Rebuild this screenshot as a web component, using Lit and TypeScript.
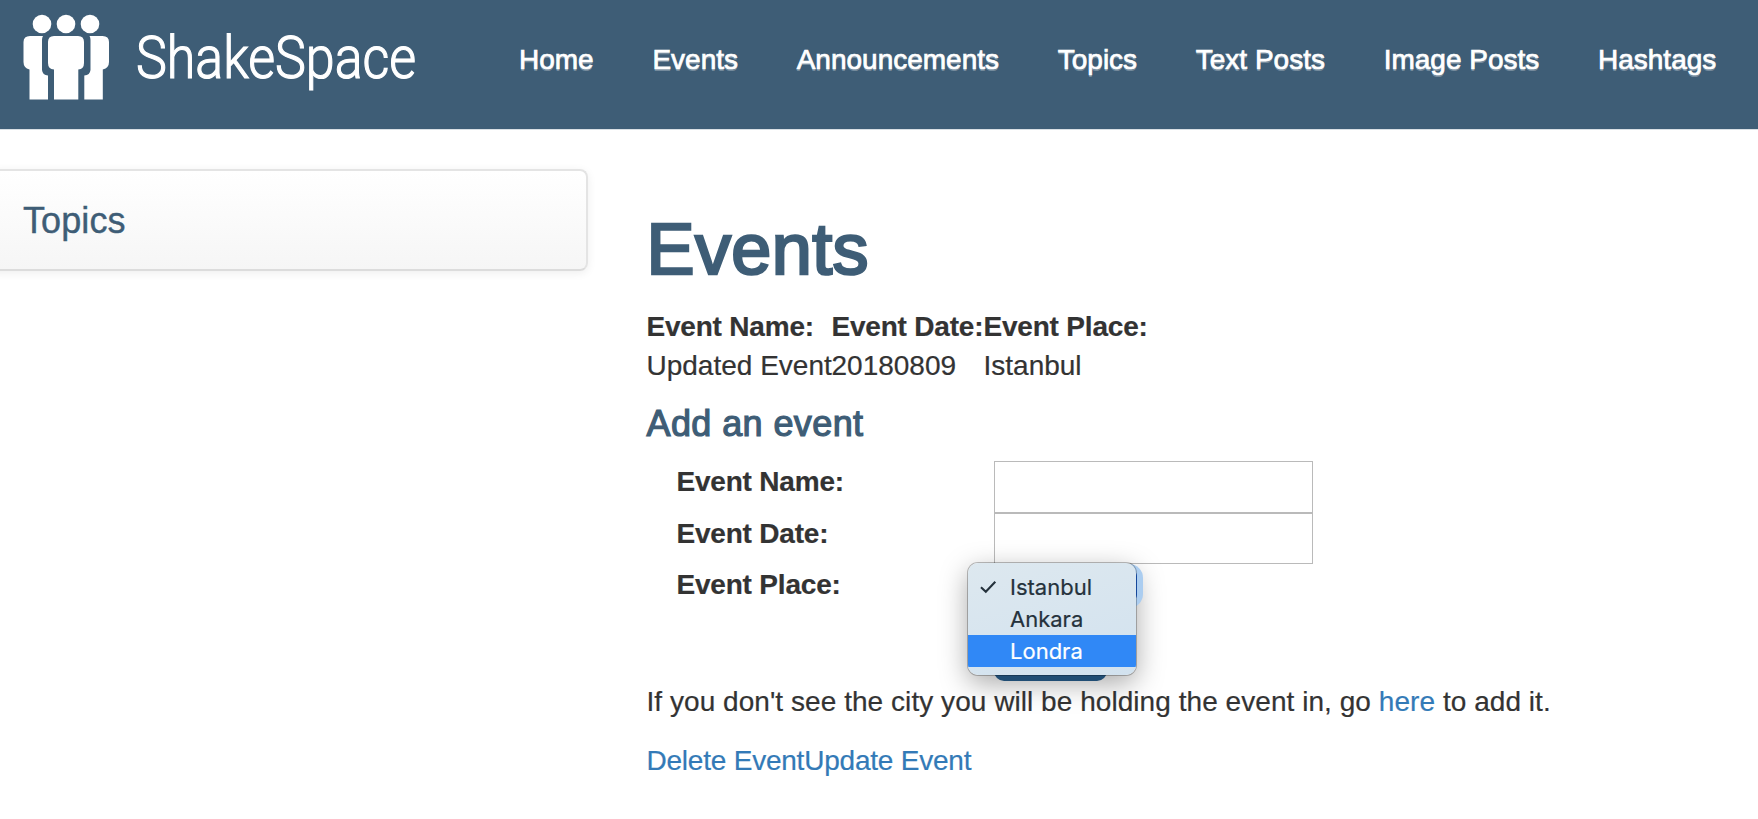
import { LitElement, html, css, svg } from "lit";
import { customElement, state } from "lit/decorators.js";
import { classMap } from "lit/directives/class-map.js";

@customElement("brand-logo")
class BrandLogo extends LitElement {
  static styles = css`
    :host { display: flex; width: 440px; height: 129px; flex: none; }
    .art { display: block; flex: none; }
    .word {
      margin: 21.500px 0 0 16px; height: 72px; font: 300 60px/72px Roboto, "Liberation Sans", sans-serif; color: #fff;
      transform: scaleX(.866); transform-origin: 0 0; white-space: nowrap; -webkit-text-stroke: 1.200px #fff;
    }
  `;
  render() {
    return html`<svg class="art" width="120" height="129" viewBox="0 0 120 129" fill="#fff">
      ${[42, 66, 90].map((x) => svg`<circle cx=${x} cy="24" r="9.3"/>`)}
      <path d="M54 36H78Q84 36 84 42V63Q84 69 78.300 69.500V99.500H54V69.500Q48 69 48 63V42Q48 36 54 36Z"/>
      <path d="M30 36H43Q42 37.500 42 40V70Q42.500 75 48 75.500V99.500H29.500V69.500Q23.500 68 23.500 62V42Q23.500 36 30 36Z"/>
      <path d="M102.500 36H89.500Q90.500 37.500 90.500 40V70Q90 75 84.300 75.500V99.500H102.800V69.500Q109 68 109 62V42Q109 36 102.500 36Z"/>
    </svg><span class="word">ShakeSpace</span>`;
  }
}

@customElement("app-root")
class AppRoot extends LitElement {
  static styles = css`
    :host {
      display: block; width: 1758px; height: 819px; overflow: hidden; background: #fff;
      font: 28px/40px "Liberation Sans", Arial, sans-serif; color: #333; -webkit-text-stroke: .2px;
    }
    * { box-sizing: border-box; }
    a { text-decoration: none; color: #337ab7; }
    .bar { display: flex; height: 130px; background: #3e5d76; border-bottom: 1px solid #d9dfe4; }
    .nav { display: flex; gap: 58.700px; padding: 40px 0 0 79px; white-space: nowrap; }
    .nav a { color: #fff; -webkit-text-stroke: .7px #fff; text-shadow: 0 2px 0 rgba(255, 255, 255, .3); }
    .body { display: flex; align-items: flex-start; }
    .side {
      width: 600px; height: 102px; margin: 39px 0 0 -12px; flex: none; padding: 30px 0 0 33px;
      border: 2px solid #e4e4e4; border-bottom-color: #dcdcdc; border-radius: 8px;
      background: linear-gradient(#fff, #f6f6f6);
      box-shadow: 0 2px 10px rgba(0, 0, 0, .07);
      font-size: 36px; color: #3e5d76; letter-spacing: .1px; -webkit-text-stroke: .4px #3e5d76;
    }
    .main { padding: 80px 0 0 58.500px; }
    .title { margin: 0 0 18px; font-size: 72px; font-weight: 400; line-height: 79px; letter-spacing: .4px; color: #3e5d76; -webkit-text-stroke: 2.600px #3e5d76; }
    .list { display: grid; grid-template-columns: 185px 152px auto; grid-auto-rows: 39px; justify-content: start; white-space: nowrap; line-height: 39px; }
    .head { font-weight: 700; letter-spacing: -.2px; }
    .sub { margin: 19px 0 17px; font-size: 36px; font-weight: 400; line-height: 40px; letter-spacing: .4px; color: #3e5d76; -webkit-text-stroke: 1.200px #3e5d76; }
    .form { display: grid; grid-template-columns: 317.500px 319px; grid-template-rows: 52px 51px 52px 66px; padding-left: 30px; }
    .label { font-weight: 700; padding-top: 1px; letter-spacing: -.2px; }
    .field { width: 319px; height: 52px; border: 1px solid #bababa; border-radius: 0; background: #fff; padding: 0 8px; font: inherit; outline: none; }
    .field.last { height: 51px; }
    .place { position: relative; height: 44px; }
    .select { position: relative; z-index: 1; width: 149px; height: 44px; border-radius: 14px; background: #abcdf0; padding: 6px 6px; }
    .cap { height: 31px; border-radius: 6px; background: #1d5fcf; }
    .menu {
      position: absolute; left: -26px; top: -1px; width: 168px; height: 112px; padding-top: 8px; z-index: 2;
      border-radius: 10px; background: linear-gradient(165deg, #dde8ef, #d2e2ef); overflow: hidden;
      box-shadow: 0 0 0 1px rgba(0, 0, 0, .25);
      font: 22px/32px Inter, "Open Sans", sans-serif; color: #25323c;
    }
    .glow { position: absolute; left: -26px; top: -1px; width: 168px; height: 112px; border-radius: 10px; box-shadow: 0 8px 28px rgba(0, 0, 0, .35); }
    .item { display: flex; height: 32px; }
    .item.on { background: #3088f6; color: #fff; }
    .mark { width: 42px; padding: 9px 0 0 12px; flex: none; line-height: 0; }
    .send { width: 113px; height: 52px; margin-top: 13px; border: 0; border-radius: 10px; background: #204d74; display: block; position: relative; z-index: 1; }
    .note { margin: 0 0 19px; white-space: nowrap; letter-spacing: .05px; }
    .links { display: flex; letter-spacing: -.22px; }
  `;

  @state() private places = ["Istanbul", "Ankara", "Londra"];
  @state() private active = "Londra";

  render() {
    return html`
      <header class="bar">
        <brand-logo></brand-logo>
        <nav class="nav">
          ${["Home", "Events", "Announcements", "Topics", "Text Posts", "Image Posts", "Hashtags"].map((t) => html`<a>${t}</a>`)}
        </nav>
      </header>
      <div class="body">
        <aside class="side">Topics</aside>
        <main class="main">
          <h1 class="title">Events</h1>
          <div class="list">
            <span class="head">Event Name:</span><span class="head">Event Date:</span><span class="head">Event Place:</span>
            <span>Updated Event</span><span>20180809</span><span>Istanbul</span>
          </div>
          <h3 class="sub">Add an event</h3>
          <div class="form">
            <label class="label">Event Name:</label><input class="field" />
            <label class="label">Event Date:</label><input class="field last" />
            <label class="label">Event Place:</label>
            <div class="place">
              <div class="glow"></div>
              <div class="select"><div class="cap"></div></div>
              <div class="menu">
                ${this.places.map((p, i) => html`<div class=${classMap({ item: true, on: p === this.active })}>
                  <span class="mark">${i === 0
                    ? html`<svg width="17" height="14" viewBox="0 0 17 14" fill="none" stroke="#25323c" stroke-width="2.100"><path d="M1 7.200L5.800 11.700L15.300 1.700"/></svg>`
                    : ""}</span><span>${p}</span></div>`)}
              </div>
            </div>
            <span></span><button class="send"></button>
          </div>
          <p class="note">If you don't see the city you will be holding the event in, go <a>here</a> to add it.</p>
          <div class="links"><a>Delete Event</a><a>Update Event</a></div>
        </main>
      </div>`;
  }
}
